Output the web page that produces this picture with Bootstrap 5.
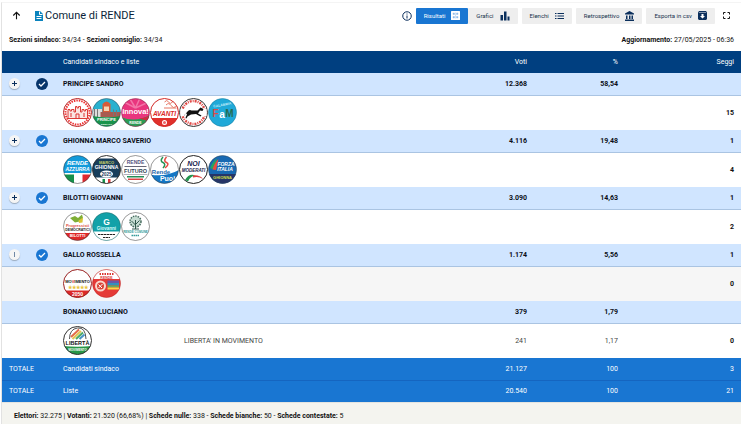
<!DOCTYPE html>
<html lang="it">
<head>
<meta charset="utf-8">
<meta name="viewport" content="width=device-width, initial-scale=1">
<title>Comune di RENDE</title>
<link href="https://cdn.jsdelivr.net/npm/bootstrap@5.3.0/dist/css/bootstrap.min.css" rel="stylesheet">
<style>
body{font-family:Roboto,"Liberation Sans",sans-serif;font-size:7px;line-height:10px;color:#111;background:#fff}
.panel{margin:2px 0 0 1px;border-left:1px solid #e2e2e2;border-top:1px solid #f4f4f4}
.topbar{height:25px;padding:0 11px 0 9px}
.page-title{font-size:11px;line-height:16px;color:#0b1f3a;padding-left:2px}
.doc-icon{margin-left:13px}
.plain{border:0;padding:0;background:none;color:#0b2f5c;line-height:1}
.tool{font-size:6px;line-height:10px;height:16px;padding:0 8px;border:0;border-radius:1px;background:#eee;color:#17324d;gap:6px}
.tool.active{background:#1976d2;color:#fff}
.tools{gap:4px}
.meta{padding:7px 7px 0 7px;height:23px}
.results{table-layout:fixed;font-size:7px;line-height:10px;margin:0;--bs-table-bg:transparent}
.results>:not(caption)>*>*{padding:0 7px;vertical-align:middle;border-bottom:0;font-weight:400}
.results tr{height:22px}
.results thead th{background:#003f80;color:#fff}
.results .cand>*{background:#d0e5ff;color:#0b0f18;font-weight:700;border-bottom:1px solid #aac4e2}
.results .lists{height:35px}
.results .lists>*{background:#fff;color:#444}
.results .lists>.seats{color:#111;font-weight:700}
.results .lists.alt>*{background:#f6f6f6}
.results .total>*{background:#1976d2;color:#fff}
.results .total+.total>*{border-top:1px solid #1565c0}
.c-toggle{width:25px}.c-check{width:29px}.c-name{width:121px}.c-num{width:91px}.c-seats{width:116px}
.results .cand>.ctl{padding:0;text-align:center}
.plus{display:block;margin:0 auto;width:11px;height:11px;border:0;border-radius:50%;padding:0;background:#f5f5f5;box-shadow:0 1px 1px #9aaabd;color:#0b2f5c}
.results svg,.topbar svg{display:block}
.logos{height:34px;align-items:center}
.logos svg{width:29px;height:29px;flex:none}
.logos text{text-anchor:middle;font-family:"Liberation Sans",sans-serif;font-weight:700}
.foot{background:#f4f4ef;padding:8px 12px 4px;border-top:1px solid #e4e4e0}
</style>
<script src="https://cdn.jsdelivr.net/npm/bootstrap@5.3.0/dist/js/bootstrap.bundle.min.js"></script>
</head>
<body>
<main class="panel">
<header class="topbar d-flex align-items-center">
 <button class="plain" aria-label="Indietro"><svg width="11" height="11" viewBox="0 0 24 24" fill="none" stroke="#111" stroke-width="2.4"><path d="M12 20V5M5 12l7-7 7 7"/></svg></button>
 <svg class="doc-icon" width="8" height="10" viewBox="0 0 16 20"><path fill="#0a83bd" d="M0 0h10l6 6v14H0z"/><path d="M9 1v6h6M3 11h10M3 15h10" stroke="#fff" stroke-width="2" fill="none"/></svg>
 <h1 class="page-title m-0 fw-normal">Comune di RENDE</h1>
 <div class="tools d-flex align-items-center ms-auto">
  <button class="plain" aria-label="Informazioni"><svg width="10" height="10" viewBox="0 0 20 20"><circle cx="10" cy="10" r="8.5" fill="none" stroke="#0b2f5c" stroke-width="2"/><path stroke="#0b2f5c" stroke-width="2" d="M10 9v6M10 5v2"/></svg></button>
  <div class="d-flex">
   <button class="tool active d-flex align-items-center">Risultati <svg width="9" height="9" viewBox="0 0 18 18"><rect width="18" height="18" rx="1" fill="#fff"/><path d="M4 4h3v3H4zM11 4h3v3h-3zM4 11h3v3H4zM11 11h3v3h-3zM9 3v12" fill="#7fb2e6" stroke="#9cc3ec"/></svg></button>
   <button class="tool d-flex align-items-center">Grafici <svg width="10" height="10" viewBox="0 0 20 20" fill="#0b2f5c"><path d="M1 8h5v11H1zM8 1h5v18H8zM15 11h4v8h-4z"/></svg></button>
  </div>
  <button class="tool d-flex align-items-center">Elenchi <svg width="9" height="10" viewBox="0 0 18 20" stroke="#0b2f5c" stroke-width="2"><path d="M0 5h3M5 5h13M0 10h3M5 10h13M0 15h3M5 15h13"/></svg></button>
  <button class="tool d-flex align-items-center">Retrospettivo <svg width="9" height="10" viewBox="0 0 18 20" fill="#0b2f5c"><path d="M9 0l9 5v2H0V5zM2 9h3v7H2zM8 9h3v7H8zM13 9h3v7h-3zM0 17h18v3H0z"/></svg></button>
  <button class="tool d-flex align-items-center">Esporta in csv <svg width="9" height="9" viewBox="0 0 18 18"><path fill="#0b2f5c" d="M2 0h14l2 3v13l-2 2H2l-2-2V3z"/><path d="M2 3h14" stroke="#fff"/><path fill="#fff" d="M7 6h4v4h3l-5 5-5-5h3z"/></svg></button>
  <button class="plain ms-1" aria-label="Schermo intero"><svg width="7" height="7" viewBox="0 0 14 14" fill="none" stroke="#111" stroke-width="2"><path d="M1 5V1h4M9 1h4v4M13 9v4H9M5 13H1V9"/></svg></button>
 </div>
</header>
<div class="meta d-flex justify-content-between">
 <div><b>Sezioni sindaco:</b> 34/34 - <b>Sezioni consiglio:</b> 34/34</div>
 <div><b>Aggiornamento:</b> 27/05/2025 - 06:36</div>
</div>
<table class="results table w-100">
<colgroup><col class="c-toggle"><col class="c-check"><col class="c-name"><col><col class="c-num"><col class="c-num"><col class="c-seats"></colgroup>
<thead><tr><th></th><th></th><th colspan="2">Candidati sindaco e liste</th><th class="text-end">Voti</th><th class="text-end">%</th><th class="text-end">Seggi</th></tr></thead>
<tbody>
<tr class="cand"><td class="ctl"><button class="plus" aria-label="Espandi"><svg viewBox="0 0 11 11"><path d="M5.5 3v5M3 5.5h5" stroke="#0b2f5c"/></svg></button></td><td class="ctl"><svg class="mx-auto" width="12" height="12" viewBox="0 0 24 24"><circle cx="12" cy="12" r="12" fill="#07356b"/><path d="M6 12l4 4 8-8" fill="none" stroke="#fff" stroke-width="2.5"/></svg></td><td colspan="2">PRINCIPE SANDRO</td><td class="text-end">12.368</td><td class="text-end">58,54</td><td></td></tr>
<tr class="lists"><td></td><td></td><td colspan="2"><div class="logos d-flex">
<svg viewBox="0 0 58 58"><circle cx="29" cy="29" r="28" fill="#fff" stroke="#b82020" stroke-width="2"/><circle cx="29" cy="29" r="24" fill="none" stroke="#e33" stroke-width="4" stroke-dasharray="3 2"/><circle cx="29" cy="29" r="21" fill="#fff"/><path fill="#fbe5e2" stroke="#dc3b36" stroke-width="2" d="M10 41V23h4v3h3v-3h5v5h3V17h3v3h3v-3h4v11h3v-5h4v3h3v-3h4v18z"/><path d="M26 41V32h6v9M16 30v8M42 30v8" stroke="#d33" stroke-width="2" fill="none"/></svg>
<svg viewBox="0 0 58 58"><defs><clipPath id="k"><circle cx="29" cy="29" r="28"/></clipPath></defs><g clip-path="url(#k)"><path fill="#28b1cf" d="M0 0h58v30H0z"/><path fill="#ddd" d="M0 22h20v18H0z"/><path fill="#d65b38" d="M21 12q8-10 16 0v17H21z"/><path fill="#f6d5b2" d="M24 17h10v9H24z"/><path fill="#a85b50" d="M17 28h41v10H17z"/><path stroke="#777" stroke-width="2" d="M5 22v16M11 22v16M43 23v13M49 24v12"/><path fill="#18934b" d="M0 36q30 5 58 0v22H0z"/><text x="29" y="46" font-size="8" fill="#fff">PRINCIPE</text><text x="29" y="53" font-size="5" fill="#fff">SINDACO</text></g><circle cx="29" cy="29" r="28" fill="none" stroke="#345" stroke-width="1"/></svg>
<svg viewBox="0 0 58 58"><g clip-path="url(#k)"><path fill="#e9357e" d="M0 0h58v58H0z"/><path d="M29 20L0 5M29 20L17 0M29 20L38 0M29 20l29-13" stroke="#f375a8" stroke-width="3"/><path fill="#2a9c55" d="M0 38q29 12 58-4v24H0z"/><path fill="#d22941" d="M36 41q15-2 22-7v13z"/><text x="29" y="31" font-size="15" fill="#fff">Innova!</text><text x="29" y="52" font-size="7" fill="#fff">RENDE</text></g><circle cx="29" cy="29" r="28" fill="none" stroke="#7a2948"/></svg>
<svg viewBox="0 0 58 58"><g clip-path="url(#k)"><path fill="#fff" d="M0 0h58v58H0z"/><path fill="none" stroke="#e67664" stroke-width="2" d="M29 8q5-6 8 0t8 0t8 4M32 14q6-6 10 1t11 2M28 20h25"/><text x="29" y="35" font-size="13" font-style="italic" fill="#db2927">AVANTI</text><path fill="#e0302b" d="M0 40h58v18H0z"/><circle cx="29" cy="49" r="5" fill="#fff"/><circle cx="29" cy="49" r="3" fill="#e66"/></g><circle cx="29" cy="29" r="28" fill="none" stroke="#d32a27" stroke-width="2"/></svg>
<svg viewBox="0 0 58 58"><circle cx="29" cy="29" r="28" fill="#fff" stroke="#333" stroke-width="2"/><circle cx="29" cy="29" r="23" fill="none" stroke="#e14a46" stroke-width="5" stroke-dasharray="4 2 2 2"/><circle cx="29" cy="29" r="19" fill="#fff"/><path fill="#fff" d="M3 22h8v14H3zM47 22h8v14h-8z"/><path fill="#111" d="M10 35l8-9q3-3 7-1l12 0 6-6 6 3-2 4-5-1-4 6 7 4-2 2-9-5-10 1-7 4-2 4-2-2 3-6-2-3-3 5z"/></svg>
<svg viewBox="0 0 58 58"><g clip-path="url(#k)"><path fill="#20a9d8" d="M0 0h58v58H0z"/><text x="29" y="16" font-size="7" fill="#c9effa" transform="rotate(-10 29 17)">CALABRIA</text><text x="15" y="38" font-size="20" fill="#d94d49">F</text><text x="28" y="40" font-size="20" fill="#fff">a</text><text x="43" y="38" font-size="20" fill="#276b52">M</text></g><circle cx="29" cy="29" r="28" fill="none" stroke="#17799a"/></svg>
</div></td><td></td><td></td><td class="seats text-end">15</td></tr>

<tr class="cand"><td class="ctl"><button class="plus" aria-label="Espandi"><svg viewBox="0 0 11 11"><path d="M5.5 3v5M3 5.5h5" stroke="#0b2f5c"/></svg></button></td><td class="ctl"><svg class="mx-auto" width="12" height="12" viewBox="0 0 24 24"><circle cx="12" cy="12" r="12" fill="#1976d2"/><path d="M6 12l4 4 8-8" fill="none" stroke="#fff" stroke-width="2.5"/></svg></td><td colspan="2">GHIONNA MARCO SAVERIO</td><td class="text-end">4.116</td><td class="text-end">19,48</td><td class="text-end">1</td></tr>
<tr class="lists"><td></td><td></td><td colspan="2"><div class="logos d-flex">
<svg viewBox="0 0 58 58"><g clip-path="url(#k)"><path fill="#129bdb" d="M0 0h58v36H0z"/><path fill="#fff" d="M0 36h58v22H0z"/><path fill="#16904a" d="M0 39h22v19H0z"/><path fill="#e02a30" d="M39 39h19v19H39z"/><text x="29" y="20" font-size="12" font-style="italic" fill="#fff">RENDE</text><text x="29" y="31" font-size="10" font-style="italic" fill="#fff">AZZURRA</text></g><circle cx="29" cy="29" r="28" fill="none" stroke="#333"/></svg>
<svg viewBox="0 0 58 58"><g clip-path="url(#k)"><path fill="#fff" d="M0 0h58v58H0z"/><path fill="#173d5b" d="M0 7h58v38H0z"/><text x="29" y="17" font-size="8" fill="#c5cd68">MARCO</text><text x="29" y="28" font-size="10" fill="#fff">GHIONNA</text><ellipse cx="29" cy="38" rx="13" ry="7" fill="#fff"/><text x="29" y="41" font-size="9" fill="#173d5b">2025</text><path fill="#16904a" d="M21 48h5v8h-5z"/><path fill="#dc3838" d="M32 48h5v8h-5z"/></g><circle cx="29" cy="29" r="28" fill="none" stroke="#333" stroke-width="2"/></svg>
<svg viewBox="0 0 58 58"><circle cx="29" cy="29" r="28" fill="#fff" stroke="#333"/><text x="29" y="18" font-size="10" fill="#555580">RENDE</text><path fill="#667" d="M7 22h44v2H7zM5 39h48v1H5z"/><text x="29" y="36" font-size="11" fill="#345">FUTURO</text><path fill="#248d55" d="M12 42h34v3H12z"/><path fill="#dc4141" d="M14 47h30v3H14z"/></svg>
<svg viewBox="0 0 58 58"><g clip-path="url(#k)"><path fill="#fff" d="M0 0h58v58H0z"/><path fill="none" stroke="#259454" stroke-width="3" d="M26 4q-7 8 0 11t0 11"/><path fill="none" stroke="#e54b42" stroke-width="3" d="M33 4q-7 8 0 11t-3 11"/><path fill="#1476c4" d="M0 39q30 6 58-9v28H0z"/><text x="22" y="37" font-size="12" fill="#1966ac">Rende</text><text x="35" y="51" font-size="14" fill="#fff">Puoi</text></g><circle cx="29" cy="29" r="28" fill="none" stroke="#333"/></svg>
<svg viewBox="0 0 58 58"><circle cx="29" cy="29" r="28" fill="#fff" stroke="#222" stroke-width="2"/><text x="29" y="22" font-size="14" font-style="italic" fill="#15214b">NOI</text><text x="29" y="34" font-size="9" font-style="italic" fill="#15214b">MODERATI</text><path fill="#249650" d="M12 50q8-14 21-9-10 1-15 12z"/><path fill="#dc4141" d="M28 41q13-2 20 7-9-6-20-3z"/></svg>
<svg viewBox="0 0 58 58"><g clip-path="url(#k)"><path fill="#1869b2" d="M0 0h58v58H0z"/><path fill="#27a461" d="M4 26q7-16 14-19L11 29z"/><path fill="#e84d40" d="M9 29q4-14 12-21L16 30z"/><text x="36" y="21" font-size="10" font-style="italic" fill="#fff">FORZA</text><text x="34" y="31" font-size="10" font-style="italic" fill="#fff">ITALIA</text><path fill="#263568" d="M0 38h58v20H0z"/><text x="29" y="47" font-size="8" fill="#d4df46">GHIONNA</text></g><circle cx="29" cy="29" r="28" fill="none" stroke="#345"/></svg>
</div></td><td></td><td></td><td class="seats text-end">4</td></tr>

<tr class="cand"><td class="ctl"><button class="plus" aria-label="Espandi"><svg viewBox="0 0 11 11"><path d="M5.5 3v5M3 5.5h5" stroke="#0b2f5c"/></svg></button></td><td class="ctl"><svg class="mx-auto" width="12" height="12" viewBox="0 0 24 24"><circle cx="12" cy="12" r="12" fill="#1976d2"/><path d="M6 12l4 4 8-8" fill="none" stroke="#fff" stroke-width="2.5"/></svg></td><td colspan="2">BILOTTI GIOVANNI</td><td class="text-end">3.090</td><td class="text-end">14,63</td><td class="text-end">1</td></tr>
<tr class="lists"><td></td><td></td><td colspan="2"><div class="logos d-flex">
<svg viewBox="0 0 58 58"><g clip-path="url(#k)"><path fill="#fff" d="M0 0h58v58H0z"/><path fill="#7fae35" d="M14 12l10-4 6 4 8-7 2 7-7 7-9 2z"/><path fill="#d9c537" d="M31 17l9-6-1 10-7 1z"/><text x="29" y="30" font-size="8" fill="#e05044">Progressisti</text><text x="29" y="38" font-size="7" fill="#222">DEMOCRATICI</text><path fill="#df2928" d="M0 42h58v16H0z"/><text x="29" y="50" font-size="8" fill="#fff">BILOTTI</text></g><circle cx="29" cy="29" r="28" fill="none" stroke="#333"/></svg>
<svg viewBox="0 0 58 58"><g clip-path="url(#k)"><path fill="#12a1a8" d="M0 0h58v58H0z"/><path fill="#fff" d="M0 39h58v19H0z"/><text x="29" y="26" font-size="17" fill="#fff">G</text><text x="29" y="35" font-size="9" fill="#d9ffff">Giovanni</text><path stroke="#222" stroke-width="2" stroke-dasharray="5 1" d="M12 45h34M22 51h14"/></g><circle cx="29" cy="29" r="28" fill="none" stroke="#266"/></svg>
<svg viewBox="0 0 58 58"><circle cx="29" cy="29" r="28" fill="#fff" stroke="#333"/><circle cx="29" cy="19" r="11" fill="#c6dcd2" stroke="#456a5d" stroke-width="3" stroke-dasharray="3 2"/><path fill="none" stroke="#31584c" stroke-width="2" d="M29 34V16M29 26l-8-8M29 25l8-8M22 34h14"/><text x="29" y="42" font-size="6" fill="#369b9a">RENDE COMUNE</text><path stroke="#369b9a" stroke-width="3" stroke-dasharray="3 1" d="M21 47h16"/></svg>
</div></td><td></td><td></td><td class="seats text-end">2</td></tr>

<tr class="cand"><td class="ctl"><button class="plus" aria-label="Espandi"><svg viewBox="0 0 11 11"><path d="M5.5 3v5" stroke="#7088a5"/></svg></button></td><td class="ctl"><svg class="mx-auto" width="12" height="12" viewBox="0 0 24 24"><circle cx="12" cy="12" r="12" fill="#1976d2"/><path d="M6 12l4 4 8-8" fill="none" stroke="#fff" stroke-width="2.5"/></svg></td><td colspan="2">GALLO ROSSELLA</td><td class="text-end">1.174</td><td class="text-end">5,56</td><td class="text-end">1</td></tr>
<tr class="lists alt"><td></td><td></td><td colspan="2"><div class="logos d-flex">
<svg viewBox="0 0 58 58"><g clip-path="url(#k)"><path fill="#fff" d="M0 0h58v58H0z"/><text x="29" y="27" font-size="8" fill="#111">MO<tspan fill="#d22">V</tspan>IMENTO</text><text x="29" y="39" font-size="9" fill="#e9c33c">★★★★★</text><path fill="#dc2927" d="M0 43h58v15H0z"/><text x="29" y="53" font-size="10" fill="#fff">2050</text></g><circle cx="29" cy="29" r="28" fill="none" stroke="#922" stroke-width="2"/></svg>
<svg viewBox="0 0 58 58"><g clip-path="url(#k)"><path fill="#e53a36" d="M0 0h58v58H0z"/><path fill="#fff" d="M0 0h58v20H0z"/><path stroke="#db3532" stroke-width="4" stroke-dasharray="3 2" d="M15 10h28"/><text x="29" y="19" font-size="7" fill="#db3532">RENDE</text><circle cx="17" cy="34" r="11" fill="#f9d8cd"/><circle cx="17" cy="34" r="7" fill="#d94235"/><path stroke="#fff" stroke-width="2" d="M13 38l8-8M13 31l7 7"/><path fill="#6b58a7" d="M31 23h23v5H31z"/><path fill="#3590bd" d="M31 28h23v5H31z"/><path fill="#67ad5a" d="M31 33h23v4H31z"/><path fill="#ffd445" d="M31 37h23v4H31z"/></g><circle cx="29" cy="29" r="28" fill="none" stroke="#b22"/></svg>
</div></td><td></td><td></td><td class="seats text-end">0</td></tr>

<tr class="cand"><td></td><td></td><td colspan="2">BONANNO LUCIANO</td><td class="text-end">379</td><td class="text-end">1,79</td><td></td></tr>
<tr class="lists"><td></td><td></td><td><div class="logos d-flex">
<svg viewBox="0 0 58 58"><g clip-path="url(#k)"><path fill="#fff" d="M0 0h58v58H0z"/><path fill="none" stroke="#555" stroke-width="2" d="M13 26q0-20 16-22t17 22"/><path stroke="#e36b4a" stroke-width="4" d="M16 22L32 7"/><path stroke="#e3c453" stroke-width="4" d="M19 26L36 10"/><path stroke="#4da967" stroke-width="4" d="M26 26L40 13"/><path stroke="#4993c5" stroke-width="4" d="M33 26l10-9"/><text x="29" y="37" font-size="11" fill="#111">LIBERTÀ</text><path fill="#279747" d="M0 40q29 3 58 0v18H0z"/><text x="29" y="49" font-size="6" fill="#fff">MOVIMENTO</text></g><circle cx="29" cy="29" r="28" fill="none" stroke="#333" stroke-width="2"/></svg>
</div></td><td>LIBERTA' IN MOVIMENTO</td><td class="text-end">241</td><td class="text-end">1,17</td><td class="seats text-end">0</td></tr>
<tr class="total"><td colspan="2">TOTALE</td><td colspan="2">Candidati sindaco</td><td class="text-end">21.127</td><td class="text-end">100</td><td class="text-end">3</td></tr>
<tr class="total"><td colspan="2">TOTALE</td><td colspan="2">Liste</td><td class="text-end">20.540</td><td class="text-end">100</td><td class="text-end">21</td></tr>
</tbody></table>
<footer class="foot"><b>Elettori:</b> 32.275 | <b>Votanti:</b> 21.520 (66,68%) | <b>Schede nulle:</b> 338 - <b>Schede bianche:</b> 50 - <b>Schede contestate:</b> 5</footer>
</main>
</body>
</html>
